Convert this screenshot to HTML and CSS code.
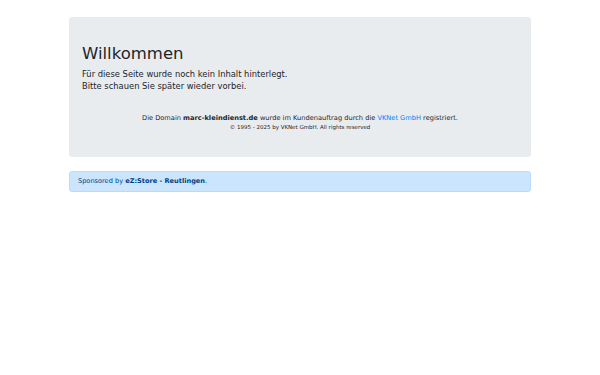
FILE: index.html
```html
<!DOCTYPE html>
<html lang="de">
<head>
    <meta charset="UTF-8">
    <meta name="viewport" content="width=device-width, initial-scale=1.0">
    <title>marc-kleindienst.de</title>
    <link rel="stylesheet" href="styles.css">
</head>
<body>
    <div class="container">
        <div class="jumbotron">
            <h1>Willkommen</h1>
            <p class="lead">Für diese Seite wurde noch kein Inhalt hinterlegt.<br>Bitte schauen Sie später wieder vorbei.</p>
            <div class="info">
                <p class="domain">Die Domain <b>marc-kleindienst.de</b> wurde im Kundenauftrag durch die <a href="#">VKNet GmbH</a> registriert.</p>
                <p class="copy">© 1995 - 2025 by VKNet GmbH. All rights reserved</p>
            </div>
        </div>
        <div class="alert">Sponsored by <b>eZ:Store - Reutlingen</b>.</div>
    </div>
</body>
</html>
```

FILE: styles.css
```css
body {
    font-family: "DejaVu Sans", sans-serif;
    background-color: #fff;
    color: #212529;
    margin: 0;
    padding: 0;
}
.container {
    width: 462px;
    margin: 17px auto 0;
}
.jumbotron {
    background-color: #e9ecef;
    border-radius: 3px;
    height: 140px;
    box-sizing: border-box;
    padding: 27px 13px 0;
}
h1 {
    font-size: 16.5px;
    font-weight: normal;
    margin: 0 0 4px;
    line-height: 20px;
}
.lead {
    font-size: 8.35px;
    line-height: 12px;
    margin: 0;
}
.info {
    text-align: center;
    margin-top: 22px;
}
.domain {
    font-size: 6.65px;
    line-height: 9px;
    margin: 0;
}
.domain a {
    color: #007bff;
    text-decoration: none;
}
.copy {
    font-size: 5.5px;
    line-height: 9px;
    margin: 0;
}
.alert {
    margin-top: 14px;
    height: 21px;
    box-sizing: border-box;
    padding: 0 8px;
    font-size: 6.6px;
    line-height: 19px;
    color: #004085;
    background-color: #cce5ff;
    border: 1px solid #b8daff;
    border-radius: 3px;
}
```
